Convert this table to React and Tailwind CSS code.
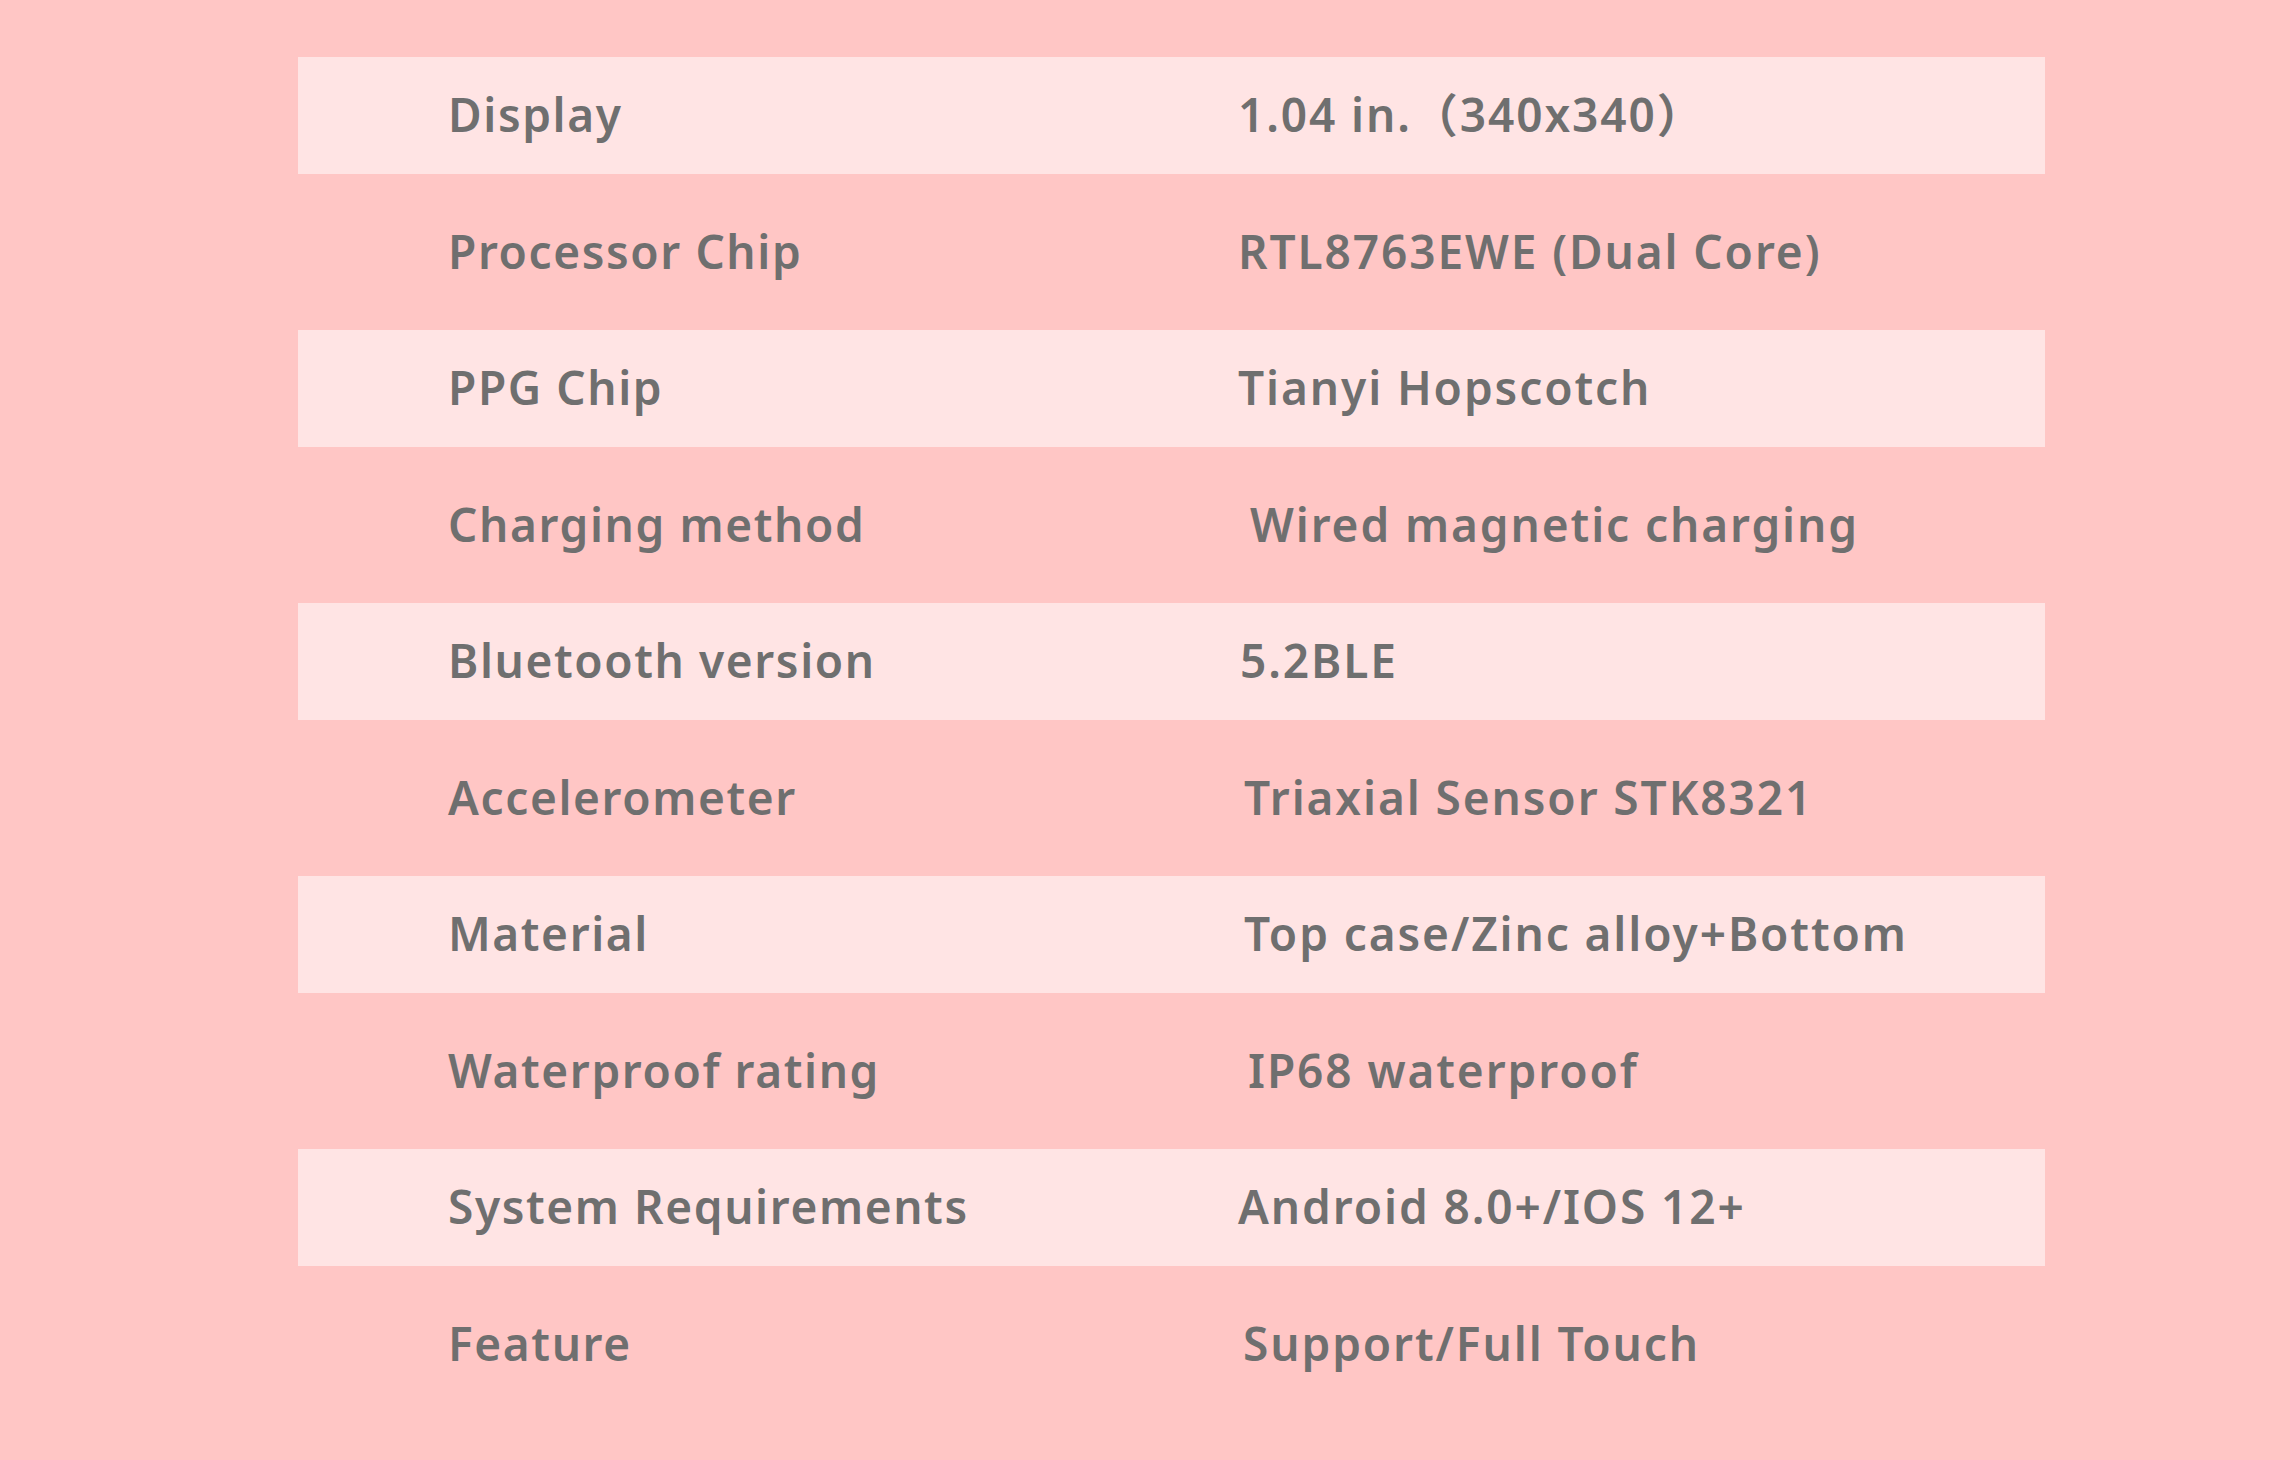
const specs = [
  { label: "Display", value: "1.04 in.（340x340）", pad: "pl-0" },
  { label: "Processor Chip", value: "RTL8763EWE (Dual Core)", pad: "pl-0" },
  { label: "PPG Chip", value: "Tianyi Hopscotch", pad: "pl-0" },
  { label: "Charging method", value: "Wired magnetic charging", pad: "pl-[12px]" },
  { label: "Bluetooth version", value: "5.2BLE", pad: "pl-[2px]" },
  { label: "Accelerometer", value: "Triaxial Sensor STK8321", pad: "pl-[6px]" },
  { label: "Material", value: "Top case/Zinc alloy+Bottom", pad: "pl-[6px]" },
  { label: "Waterproof rating", value: "IP68 waterproof", pad: "pl-[10px]" },
  { label: "System Requirements", value: "Android 8.0+/IOS 12+", pad: "pl-0" },
  { label: "Feature", value: "Support/Full Touch", pad: "pl-[5px]" },
];

const SpecRow = ({ label, value, pad, light }) => (
  <div className={`flex items-center pb-[3px] ${light ? "h-[117px] bg-[#ffe4e4]" : "h-[156px]"}`}>
    <span className="w-[940px] shrink-0 pl-[150px] whitespace-nowrap">{label}</span>
    <span className={`whitespace-nowrap tracking-[1.9px] ${pad}`}>{value}</span>
  </div>
);

export default function App() {
  return (
    <div className="min-h-[1460px] w-full bg-[#ffc6c5] pt-[57px]">
      <div
        className="ml-[298px] w-[1747px] text-[46px] font-semibold leading-none tracking-[1.6px] text-[#6f6f6f]"
        style={{ fontFamily: '"Noto Sans", "Noto Sans CJK SC", sans-serif' }}
      >
        {specs.map((row, i) => (
          <SpecRow key={row.label} {...row} light={i % 2 === 0} />
        ))}
      </div>
    </div>
  );
}
